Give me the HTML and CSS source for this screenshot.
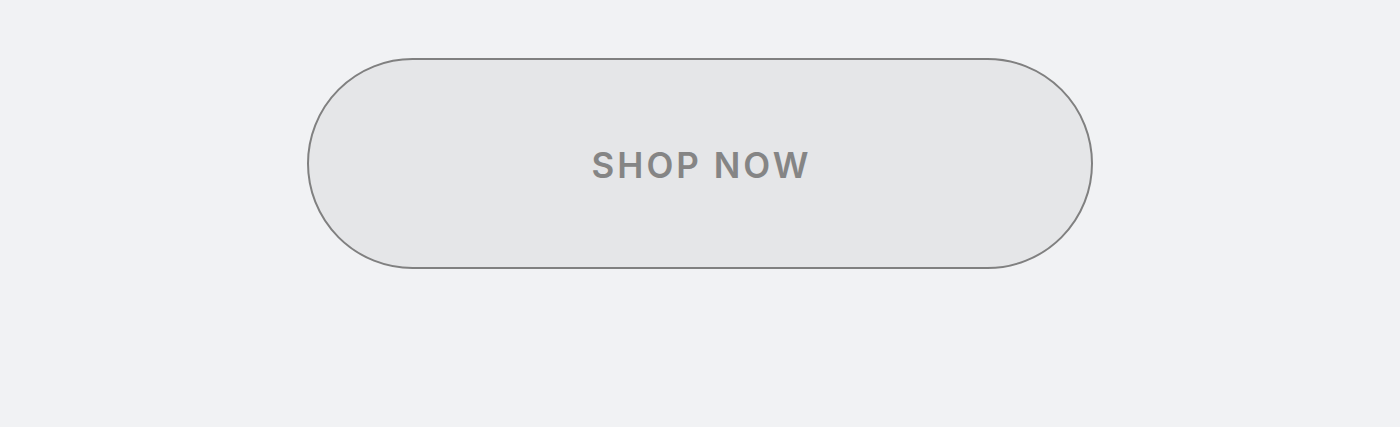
FILE: index.html
```html
<!DOCTYPE html>
<html lang="en">
  <head>
    <meta charset="utf-8">
    <title>shop now</title>
    <link rel="stylesheet" href="styles.css">
  </head>
  <body>
    <main class="stage">
      <button class="shopBtn" type="button">SHOP NOW</button>
    </main>
  </body>
</html>
```

FILE: styles.css
```css
html, body{
  margin : 0;
  height : 100%;
  background : #f1f2f4;
}
.stage{
  display : flex;
  justify-content : center;
  padding-top : 58px;
}
.shopBtn{
  width : 786px;
  height : 211px;
  border : 2px solid #808080;
  border-radius : 106px;
  background : #e5e6e8;
  color : #858585;
  font-family : "Inter", "Liberation Sans", sans-serif;
  font-size : 35px;
  font-weight : 600;
  letter-spacing : 3px;
  padding : 2px 0 0 3px;
  cursor : pointer;
}
```
